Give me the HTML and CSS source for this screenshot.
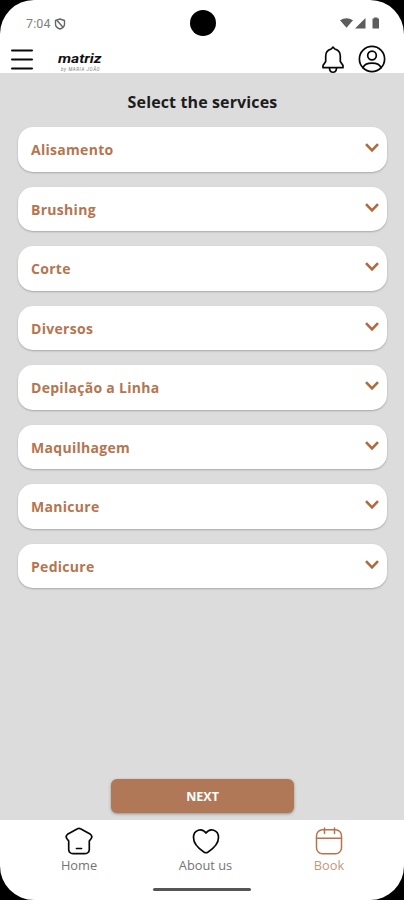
FILE: index.html
```html
<!DOCTYPE html>
<html lang="en">
<head>
<meta charset="utf-8">
<title>Select the services</title>
<link rel="stylesheet" href="styles.css">
</head>
<body>
<div class="phone">
  <div class="status">
    <span class="time">7:04</span>
    <svg class="shield" width="12" height="12" viewBox="0 0 12 12"><path d="M6 1 10.5 2.5V6C10.5 8.5 8.5 10.2 6 11 3.5 10.2 1.5 8.5 1.5 6V2.5ZM3 2.5 9 9.3"/></svg>
    <span class="camera"></span>
    <svg class="signals" width="40" height="13" viewBox="0 0 40 13"><path d="M0 3.3Q6.5-1 13 3.3L6.5 10.8ZM25.500 1V11.500H15ZM34 1.500V.5H37.500V1.500H39V11.500H32.500V1.500Z"/></svg>
  </div>
  <header class="topbar">
    <svg class="menu" width="22" height="21" viewBox="0 0 22 21"><path d="M1 1.500H21M1 10.500H21M1 19.500H21"/></svg>
    <div class="logo"><span class="brand">matriz</span><span class="tagline">by MARIA JOÃO</span></div>
    <svg class="bell" width="24" height="28" viewBox="0 0 24 28"><path d="M12 1.200 10.200 3C6.500 4 4.700 6.500 4.700 10V15.500L2 19.500V21.700H22V19.500L19.300 15.500V10C19.300 6.500 17.500 4 13.800 3ZM8.500 22.500C9 27.500 15 27.500 15.500 22.500"/></svg>
    <svg class="user" width="28" height="28" viewBox="0 0 28 28"><circle cx="14" cy="14" r="12.600"/><circle cx="14" cy="10.500" r="4.300"/><path d="M5 22.800C7 16.500 21 16.500 23 22.800"/></svg>
  </header>
  <main>
    <h1>Select the services</h1>
    <ul class="services">
      <li><span>Alisamento</span><svg width="16" height="11" viewBox="0 0 16 11"><path d="M2 2.200 8 8.300 14 2.200"/></svg></li>
      <li><span>Brushing</span><svg width="16" height="11" viewBox="0 0 16 11"><path d="M2 2.200 8 8.300 14 2.200"/></svg></li>
      <li><span>Corte</span><svg width="16" height="11" viewBox="0 0 16 11"><path d="M2 2.200 8 8.300 14 2.200"/></svg></li>
      <li><span>Diversos</span><svg width="16" height="11" viewBox="0 0 16 11"><path d="M2 2.200 8 8.300 14 2.200"/></svg></li>
      <li><span>Depilação a Linha</span><svg width="16" height="11" viewBox="0 0 16 11"><path d="M2 2.200 8 8.300 14 2.200"/></svg></li>
      <li><span>Maquilhagem</span><svg width="16" height="11" viewBox="0 0 16 11"><path d="M2 2.200 8 8.300 14 2.200"/></svg></li>
      <li><span>Manicure</span><svg width="16" height="11" viewBox="0 0 16 11"><path d="M2 2.200 8 8.300 14 2.200"/></svg></li>
      <li><span>Pedicure</span><svg width="16" height="11" viewBox="0 0 16 11"><path d="M2 2.200 8 8.300 14 2.200"/></svg></li>
    </ul>
    <button class="next">NEXT</button>
  </main>
  <nav>
    <a class="tab"><svg width="28" height="28" viewBox="0 0 28 28"><path d="M12.500 1.800 2.500 7.300Q.3 9 1.800 11.500L3.700 14V22.500Q4 26.500 8 26.700H20Q24 26.500 24.300 22.500V14L26.200 11.500Q27.700 9 25.500 7.300L15.500 1.800Q14 .9 12.500 1.800ZM11.500 21.500H16.500"/></svg><span>Home</span></a>
    <a class="tab about"><svg width="28" height="28" viewBox="0 0 28 28"><path d="M14 6C10 .5 1.500 2.500 1.500 10.500 1.500 17.500 8 22.500 12.200 25.200Q14 26.300 15.800 25.200C20 22.500 26.500 17.500 26.500 10.500 26.500 2.500 18 .5 14 6Z"/></svg><span>About us</span></a>
    <a class="tab active"><svg width="28" height="28" viewBox="0 0 28 28"><rect x="1.500" y="2.700" width="25" height="24" rx="6"/><path d="M1.500 11.200H26.500M9.500 1V6.500M19.500 1V6.500"/></svg><span>Book</span></a>
  </nav>
  <div class="gesture"></div>
</div>
</body>
</html>
```
FILE: styles.css
```css
* { box-sizing: border-box; }
body { margin: 0; background: #000; font-family: "Open Sans", sans-serif; }
svg { display: block; fill: none; stroke: #080808; stroke-width: 1.7; stroke-linecap: round; stroke-linejoin: round; flex: none; }
.phone { position: relative; width: 404px; height: 900px; display: flex; flex-direction: column; background: #fff; border-radius: 34px; overflow: hidden; }
.status { height: 45px; display: flex; align-items: center; padding: 2px 24px 0 26px; }
.time { width: 25px; font: 12.500px/16px Roboto, sans-serif; color: #808080; letter-spacing: .1px; }
.shield { margin-left: 3px; stroke: #666; stroke-width: 1.400; }
.camera { width: 26px; height: 26px; margin: -1px 0 0 123.500px; border-radius: 50%; background: #000; }
.signals { margin-left: auto; fill: #5d5d5d; stroke: none; }
.topbar { height: 28px; display: flex; align-items: flex-start; padding: 0 18px 0 11px; }
.menu { margin-top: 4px; stroke-width: 2; }
.logo { width: 50px; height: 21px; margin: 7px 0 0 25px; display: flex; flex-direction: column; }
.brand { width: 50px; font: italic bold 12px/15px Roboto, sans-serif; color: #111; transform: scaleX(1.300); transform-origin: left; }
.tagline { margin: 0 0 0 3px; font: italic 4.500px/5px Roboto, sans-serif; color: #777; white-space: nowrap; letter-spacing: .6px; }
.bell { margin: 1px 13px 0 auto; }
.user { margin-top: 0; }
main { height: 747px; background: #dcdcdc; display: flex; flex-direction: column; align-items: center; padding: 18px 17px 7px 18px; }
h1 { margin: 0; font-size: 16px; line-height: 22px; font-weight: 700; color: #1c1c1c; letter-spacing: .13px; }
.services { list-style: none; width: 369px; margin: 14px 0 0; padding: 0; display: flex; flex-direction: column; gap: 15px; }
.services li { height: 44.500px; padding: 0 7px 0 13px; display: flex; align-items: center; justify-content: space-between; border-radius: 15px; background: #fff; box-shadow: 0 1px 2px rgba(0,0,0,.24); }
.services span { margin-top: 2px; font-size: 14px; line-height: 20px; font-weight: 700; color: #b57550; letter-spacing: .29px; }
.services svg { margin-top: -3px; stroke: #b16a3d; stroke-width: 2.600; stroke-linecap: butt; stroke-linejoin: miter; }
.next { width: 183px; height: 34px; margin: auto 0 0; padding: 1px 0 0; border: 0; border-radius: 6px; background: #b17857; color: #fff; font: bold 12.500px/20px "Open Sans", sans-serif; box-shadow: 0 1px 3px rgba(0,0,0,.35); }
nav { height: 67px; display: flex; justify-content: space-between; padding: 7px 36px 0 40px; }
.tab { width: 78px; display: flex; flex-direction: column; align-items: center; font-size: 12.800px; line-height: 18px; color: #747474; }
.tab span { margin-top: 1px; }
.about { margin-left: 3px; }
.active { color: #c6977e; }
.active svg { stroke: #b9734a; stroke-width: 1.500; }
.gesture { width: 98px; height: 3px; margin: 1px auto 0; border-radius: 2px; background: #555; }
```
